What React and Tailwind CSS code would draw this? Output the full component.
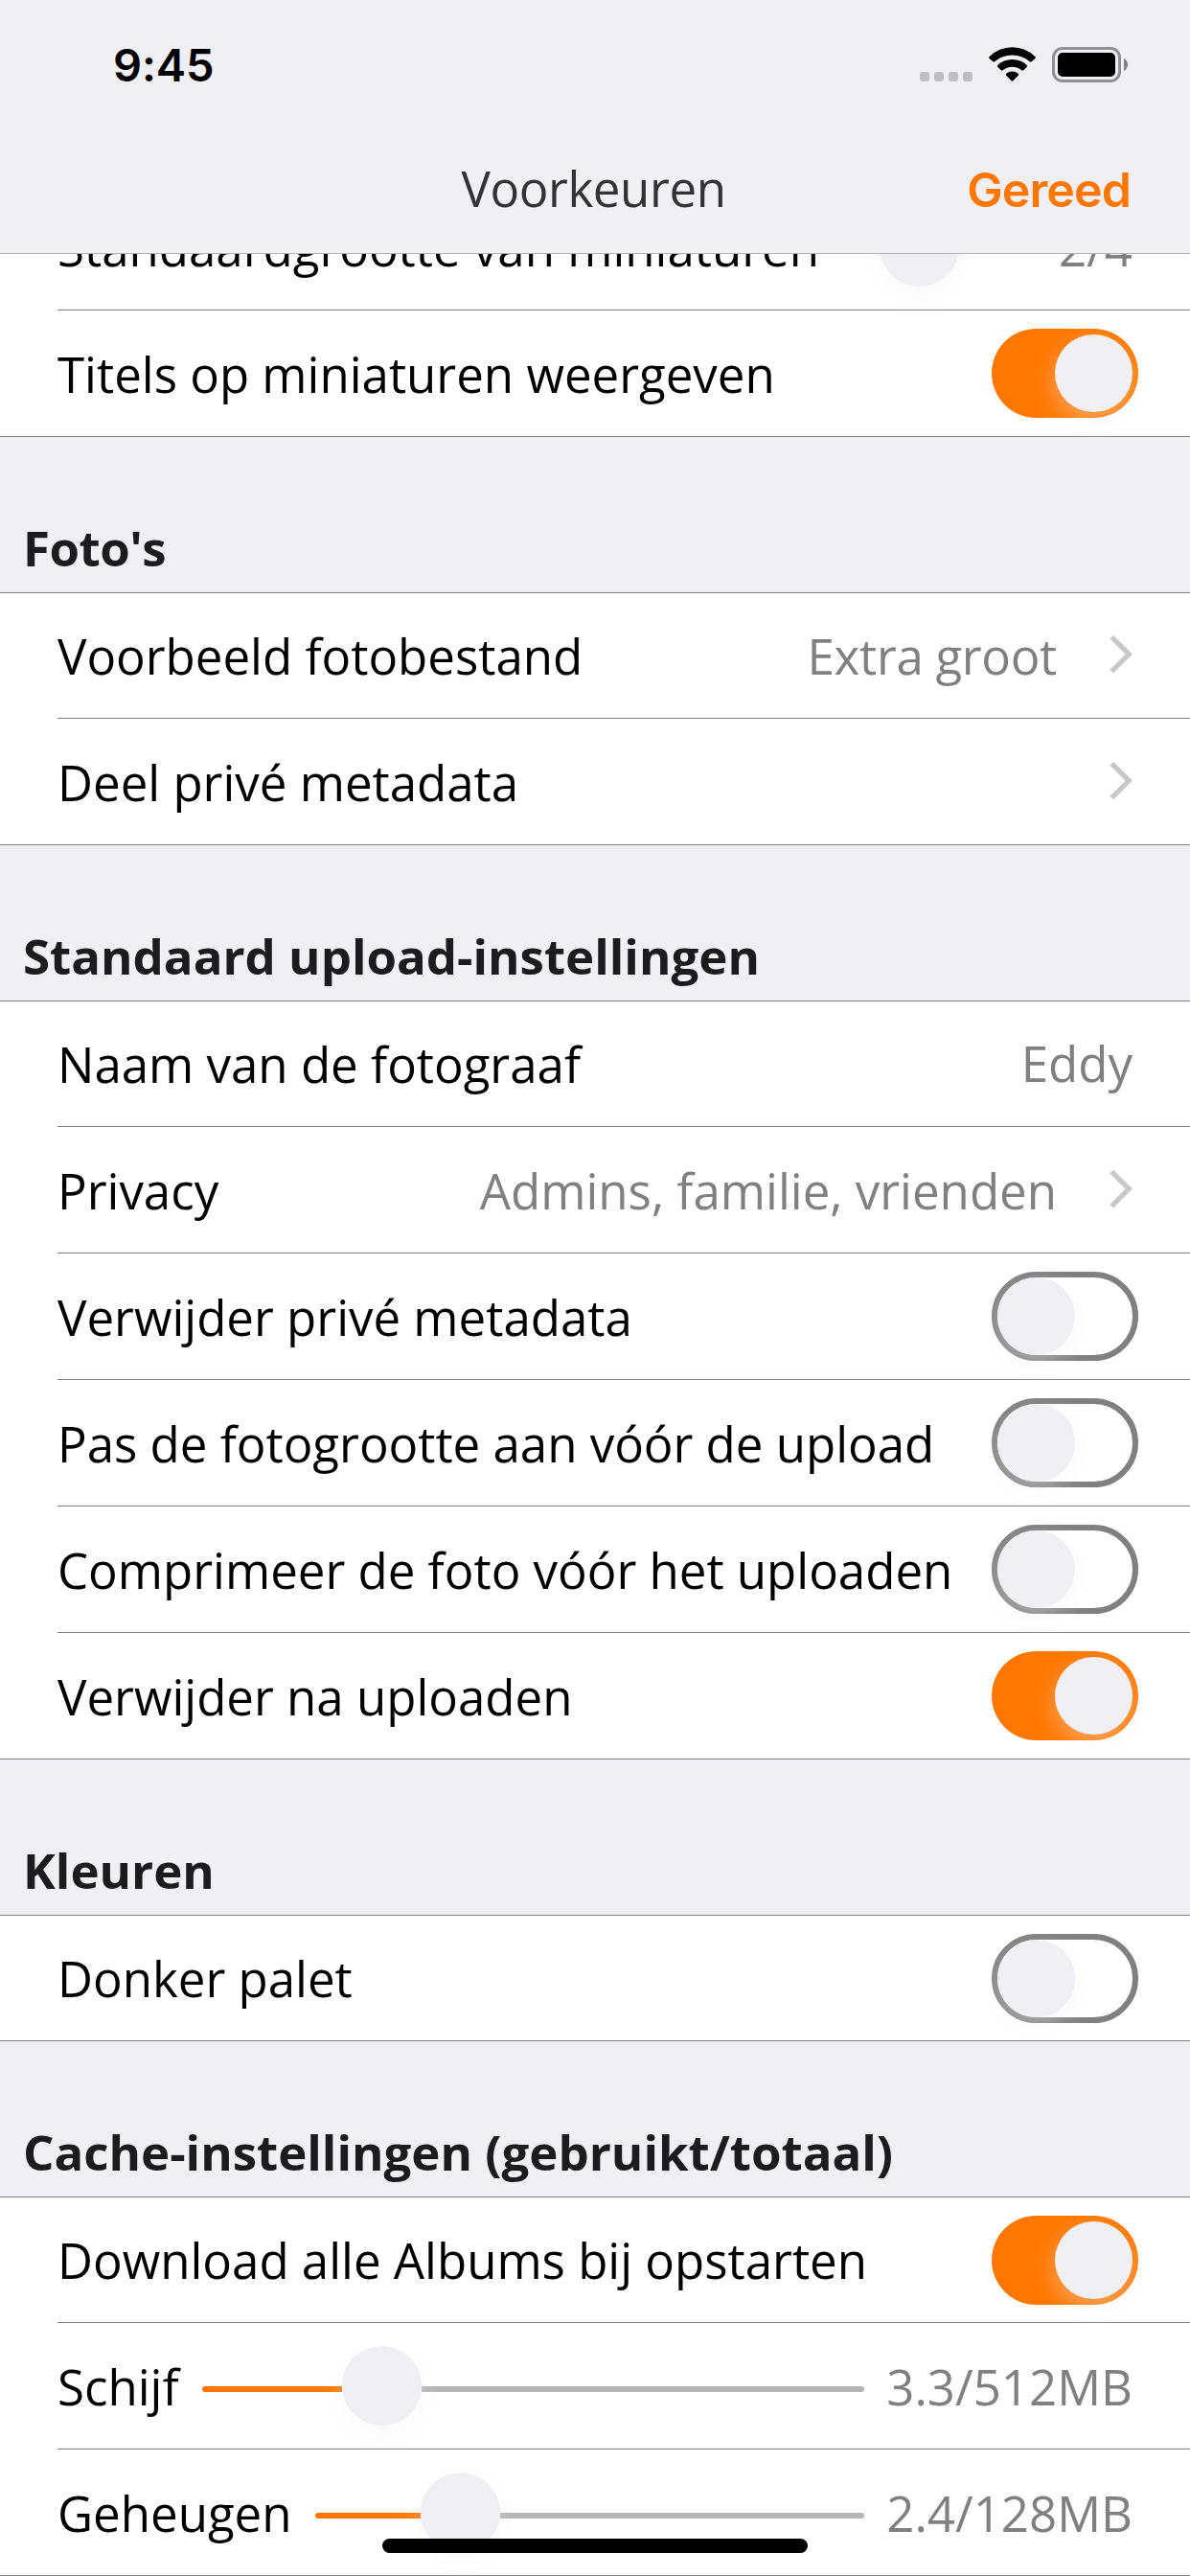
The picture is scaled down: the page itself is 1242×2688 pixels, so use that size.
import React from "react";

const knobShadow = "shadow-[0_9px_24px_rgba(239,239,244,0.4)]";

function StatusBar() {
  return (
    <div className="flex h-[132px] items-start justify-between pl-[118px] pr-[65px]">
      <span className="mt-[39px] font-['Inter',sans-serif] text-[47px] font-semibold leading-[58px] tracking-[-0.1px] text-black">
        9:45
      </span>
      <div className="flex pt-[49px]">
        <div className="mt-[26px] flex gap-[5px]">
          {[0, 1, 2, 3].map((i) => (
            <span key={i} className="h-[10px] w-[10px] rounded-[3px] bg-[#bfbfc2]" />
          ))}
        </div>
        <svg className="ml-[17px]" width="49" height="37" viewBox="0 0 49 37">
          <path d="M0.7 12.2Q-0.4 11 0.7 9.9A34 34 0 0 1 48.3 9.9Q49.4 11 48.3 12.2L44.6 15.2Q43.7 16 42.8 15.2A28.6 28.6 0 0 0 6.2 15.2Q5.3 16 4.4 15.2Z" />
          <path d="M9.2 20.8Q8.3 19.8 9.3 18.9A22.5 22.5 0 0 1 39.7 18.9Q40.7 19.8 39.8 20.8L36.2 24.3Q35.3 25.2 34.3 24.3A15 15 0 0 0 14.7 24.3Q13.7 25.2 12.8 24.3Z" />
          <path d="M18.2 29.7Q17.3 28.7 18.3 27.8A9.6 9.6 0 0 1 30.7 27.8Q31.7 28.7 30.8 29.7L25.4 35.2Q24.5 36.1 23.6 35.2Z" />
        </svg>
        <div className="ml-[17px] flex items-center self-start">
          <div className="h-[37px] w-[72px] rounded-[11px] border-[3px] border-[#909093] p-[3px]">
            <div className="h-[25px] w-[60px] rounded-[5px] bg-black" />
          </div>
          <svg className="ml-[3px]" width="4" height="13" viewBox="0 0 4 13">
            <path d="M0 0C2.4 1 4 3.6 4 6.5S2.4 12 0 13Z" fill="#838386" />
          </svg>
        </div>
      </div>
    </div>
  );
}

function NavBar() {
  return (
    <header className="h-[265px] border-b border-[#b2b2b4] bg-[#efeff4]">
      <StatusBar />
      <div className="grid h-[132px] grid-cols-3 items-center px-[62px]">
        <span />
        <h1 className="pb-[4px] pr-[3px] text-center leading-[69px] tracking-[-0.4px] text-[#333335]">Voorkeuren</h1>
        <span className="text-right font-['Inter',sans-serif] text-[50px] font-semibold leading-[61px] tracking-[-0.9px] text-[#ff7700]">
          Gereed
        </span>
      </div>
    </header>
  );
}

function Toggle({ on }) {
  return on ? (
    <div className="flex h-[93px] w-[153px] shrink-0 justify-end rounded-full bg-[#ff7700] p-[6px]">
      <div className={"h-[81px] w-[81px] rounded-full bg-[#efeff4] " + knobShadow} />
    </div>
  ) : (
    <div className="flex h-[93px] w-[153px] shrink-0 rounded-full border-[6px] border-[#808080]">
      <div className={"h-[81px] w-[81px] rounded-full bg-[#efeff4] " + knobShadow} />
    </div>
  );
}

function Chevron() {
  return (
    <svg className="mb-[2px] shrink-0" width="24" height="40" viewBox="0 0 24 40">
      <path d="M2.2 1.6L20.3 19.6L2.2 37.6" fill="none" stroke="#c7c7cc" strokeWidth="5.2" />
    </svg>
  );
}

function Slider({ filled }) {
  return (
    <div className="flex flex-1 items-center">
      <div className="mt-[7px] h-[6px] shrink-0 rounded-l-full bg-[#ff7700]" style={{ width: filled }} />
      <div className={"relative z-10 h-[83px] w-[83px] shrink-0 rounded-full bg-[#efeff4] " + knobShadow} />
      <div className="mt-[7px] h-[6px] flex-1 rounded-r-full bg-[#b5b5b5]" />
    </div>
  );
}

function Row({ label, first, last, children }) {
  return (
    <div
      className={
        "shrink-0 bg-white pl-[60px] " +
        (first ? "h-[131px] " : "h-[132px] [&_span]:pt-[1px] ") +
        (last ? "border-b border-[#808080]" : "")
      }
    >
      <div className={"flex h-full items-center justify-between " + (last ? "" : "border-b border-[#808080]")}>
        <span className="whitespace-nowrap">{label}</span>
        {children}
      </div>
    </div>
  );
}

function ToggleRow({ on, ...rest }) {
  return (
    <Row {...rest}>
      <div className="pr-[54px]">
        <Toggle on={on} />
      </div>
    </Row>
  );
}

function LinkRow({ value, tight, ...rest }) {
  return (
    <Row {...rest}>
      <div className="flex items-center gap-[55px] pr-[60px]">
        {value && <span className={"text-[#808080] " + (tight ? "tracking-[-0.3px]" : "")}>{value}</span>}
        <Chevron />
      </div>
    </Row>
  );
}

function SliderRow({ value, filled, ...rest }) {
  return (
    <Row {...rest}>
      <div className="flex flex-1 items-center pl-[24px] pr-[60px]">
        <Slider filled={filled} />
        <span className="ml-[23px] text-[#808080]">{value}</span>
      </div>
    </Row>
  );
}

function SectionTitle({ children, tight }) {
  return (
    <h2
      className={
        "flex h-[163px] items-end border-b border-[#808080] pb-[12px] pl-[24px] font-bold text-[#1c1c1e] " +
        (tight ? "tracking-[-0.5px]" : "")
      }
    >
      {children}
    </h2>
  );
}

export default function App() {
  return (
    <div className="relative h-[2688px] w-[1242px] overflow-hidden bg-[#efeff4] font-['Open_Sans',sans-serif] text-[51px] leading-[69px] text-black">
      <NavBar />

      <div className="flex h-[59px] flex-col justify-end overflow-hidden">
        <Row label="Standaardgrootte van miniaturen">
          <div className="flex items-center gap-[104px] pr-[60px]">
            <div className={"h-[83px] w-[83px] rounded-full bg-[#efeff4] " + knobShadow} />
            <span className="text-[#808080]">2/4</span>
          </div>
        </Row>
      </div>
      <ToggleRow label="Titels op miniaturen weergeven" on last />

      <SectionTitle tight>Foto's</SectionTitle>
      <LinkRow first tight label="Voorbeeld fotobestand" value="Extra groot" />
      <LinkRow last label="Deel privé metadata" />

      <SectionTitle>Standaard upload-instellingen</SectionTitle>
      <Row first label="Naam van de fotograaf">
        <span className="pb-[2px] pr-[60px] text-[#808080]">Eddy</span>
      </Row>
      <LinkRow label="Privacy" value="Admins, familie, vrienden" />
      <ToggleRow label="Verwijder privé metadata" />
      <ToggleRow label="Pas de fotogrootte aan vóór de upload" />
      <ToggleRow label="Comprimeer de foto vóór het uploaden" />
      <ToggleRow label="Verwijder na uploaden" on last />

      <SectionTitle>Kleuren</SectionTitle>
      <ToggleRow first last label="Donker palet" />

      <SectionTitle>Cache-instellingen (gebruikt/totaal)</SectionTitle>
      <ToggleRow first label="Download alle Albums bij opstarten" on />
      <SliderRow label="Schijf" value="3.3/512MB" filled={146} />
      <SliderRow last label="Geheugen" value="2.4/128MB" filled={110} />

      <div className="absolute bottom-[24px] left-[399px] z-20 h-[15px] w-[444px] rounded-full bg-black" />
    </div>
  );
}
